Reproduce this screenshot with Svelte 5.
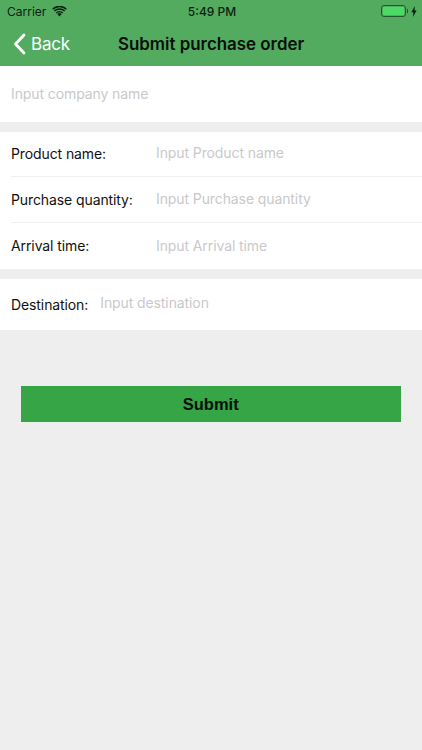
<!--
  Submit purchase order form
-->

<script lang="ts">
	const productRows = [
		{ label: 'Product name:', placeholder: 'Input Product name' },
		{ label: 'Purchase quantity:', placeholder: 'Input Purchase quantity' },
		{ label: 'Arrival time:', placeholder: 'Input Arrival time' }
	];
</script>

<div class="page">
	<header class="header">
		<div class="status">
			<div class="status-left">
				<span>Carrier</span>
				<svg class="wifi" viewBox="0 0 16 12" width="15" height="11" aria-hidden="true">
					<path d="M8 11.5 5.6 8.8a3.4 3.4 0 0 1 4.8 0Z" fill="#0b1f10" />
					<path d="M3.9 7.1a5.8 5.8 0 0 1 8.2 0l-1.1 1.2a4.2 4.2 0 0 0-6 0Z" fill="#0b1f10" />
					<path d="M1.8 4.9a8.8 8.8 0 0 1 12.4 0l-1.1 1.2a7.2 7.2 0 0 0-10.2 0Z" fill="#0b1f10" />
					<path d="M0 2.9a11.4 11.4 0 0 1 16 0l-1.1 1.2a9.8 9.8 0 0 0-13.8 0Z" fill="#0b1f10" />
				</svg>
			</div>
			<span class="clock">5:49 PM</span>
			<div class="status-right">
				<div class="battery"><div class="battery-fill"></div></div>
				<div class="battery-cap"></div>
				<svg viewBox="0 0 6 11" width="6" height="11" aria-hidden="true">
					<path d="M3.8 0 .4 6.2h2L1.9 11l3.7-6.6H3.5Z" fill="#0b1f10" />
				</svg>
			</div>
		</div>
		<nav class="nav">
			<div class="back">
				<svg viewBox="0 0 13 22" width="13" height="22" aria-hidden="true">
					<path d="M11 2 2.5 11 11 20" fill="none" stroke="#fff" stroke-width="2.8" stroke-linecap="round" stroke-linejoin="round" />
				</svg>
				<span>Back</span>
			</div>
			<h1>Submit purchase order</h1>
		</nav>
	</header>

	<section class="group company">
		<span class="placeholder">Input company name</span>
	</section>

	<section class="group products">
		{#each productRows as row}
			<div class="row">
				<span class="label">{row.label}</span>
				<span class="placeholder">{row.placeholder}</span>
			</div>
		{/each}
	</section>

	<section class="group destination">
		<span class="label">Destination:</span>
		<span class="placeholder">Input destination</span>
	</section>

	<div class="actions">
		<button type="button">Submit</button>
	</div>
</div>

<style>
	:global(body) {
		margin: 0;
		background: #eeeeee;
		font-family: 'Liberation Sans', Arial, sans-serif;
	}

	.page {
		min-height: 750px;
		background: #eeeeee;
	}

	.header {
		height: 66px;
		background: #53ab60;
	}

	.status {
		height: 22px;
		display: grid;
		grid-template-columns: 1fr auto 1fr;
		align-items: center;
		padding: 0 5px 0 7px;
		font-family: Inter, 'Liberation Sans', sans-serif;
		font-size: 12px;
		color: #0b1f10;
	}

	.status-left {
		display: flex;
		align-items: center;
		gap: 6px;
	}

	.clock {
		font-weight: 500;
	}

	.status-right {
		display: flex;
		align-items: center;
		justify-content: flex-end;
	}

	.battery {
		width: 25px;
		height: 12px;
		box-sizing: border-box;
		border: 1px solid #24592f;
		border-radius: 3px;
		padding: 1px;
	}

	.battery-fill {
		height: 100%;
		border-radius: 1px;
		background: #4cd964;
	}

	.battery-cap {
		width: 1px;
		height: 4px;
		margin: 0 3px 0 1px;
		background: #24592f;
	}

	.nav {
		height: 44px;
		display: flex;
		align-items: center;
		padding-left: 13px;
	}

	.back {
		width: 105px;
		flex: none;
		display: flex;
		align-items: center;
		gap: 5px;
		color: #fff;
		font-family: Inter, 'Liberation Sans', sans-serif;
		font-size: 17px;
		letter-spacing: -0.2px;
	}

	h1 {
		margin: 0;
		font-family: Inter, 'Liberation Sans', sans-serif;
		font-size: 16.9px;
		font-weight: 600;
		color: #0a0f0a;
		white-space: nowrap;
	}

	.group {
		background: #fff;
		font-family: Inter, 'Liberation Sans', sans-serif;
		font-size: 14px;
		letter-spacing: -0.1px;
	}

	.company {
		height: 56px;
		display: flex;
		align-items: center;
		padding: 0 11px 2px;
		box-sizing: border-box;
	}

	.products {
		margin-top: 10px;
		padding-left: 11px;
	}

	.row {
		height: 46px;
		display: flex;
		align-items: center;
		box-sizing: border-box;
		border-bottom: 1px solid #efefef;
	}

	.row:first-child {
		height: 45px;
		padding-bottom: 1px;
	}

	.row:last-child {
		padding-bottom: 1px;
		border-bottom: none;
	}

	.row:not(:last-child) .placeholder {
		margin-top: -2px;
	}

	.row .label {
		width: 145px;
		flex: none;
	}

	.destination {
		height: 51px;
		margin-top: 10px;
		display: flex;
		align-items: center;
		gap: 12px;
		padding: 0 11px;
		box-sizing: border-box;
	}

	.destination .placeholder {
		margin-top: -5px;
	}

	.label {
		color: #111;
	}

	.placeholder {
		color: #c9c9cb;
	}

	.actions {
		padding: 56px 21px 0 20.5px;
	}

	button {
		display: block;
		width: 100%;
		height: 35.5px;
		padding: 2px 0 0;
		border: 0;
		background: #35a546;
		color: #0a0f0a;
		font-family: 'Liberation Sans', Arial, sans-serif;
		font-size: 16.5px;
		font-weight: 700;
	}
</style>
